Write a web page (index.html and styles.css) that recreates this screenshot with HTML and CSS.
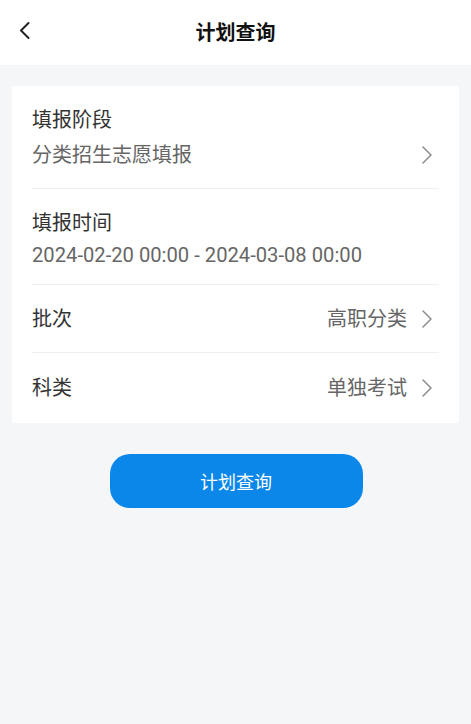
FILE: index.html
```html
<!DOCTYPE html>
<html lang="zh">
<head>
<meta charset="utf-8">
<link rel="stylesheet" href="styles.css">
</head>
<body>
<header class="nav">
  <svg class="back" width="14" height="19" viewBox="0 0 14 19"><path d="M10.5 2 L3 9.5 L10.5 17" fill="none" stroke="#222" stroke-width="2" stroke-linecap="round" stroke-linejoin="round"/></svg>
  <h1 class="title">计划查询</h1>
</header>
<main class="page">
  <section class="card">
    <div class="row stack first">
      <div class="label">填报阶段</div>
      <div class="line tall">
        <span class="value">分类招生志愿填报</span>
        <svg class="chev" width="12" height="20" viewBox="0 0 12 20"><path d="M2 2 L10 10 L2 18" fill="none" stroke="#8a8a8a" stroke-width="1.5" stroke-linecap="round" stroke-linejoin="round"/></svg>
      </div>
    </div>
    <div class="row stack">
      <div class="label">填报时间</div>
      <div class="line"><span class="value num">2024-02-20 00:00 - 2024-03-08 00:00</span></div>
    </div>
    <div class="row inline">
      <span class="label">批次</span>
      <span class="right"><span class="value">高职分类</span>
        <svg class="chev" width="12" height="20" viewBox="0 0 12 20"><path d="M2 2 L10 10 L2 18" fill="none" stroke="#8a8a8a" stroke-width="1.5" stroke-linecap="round" stroke-linejoin="round"/></svg></span>
    </div>
    <div class="row inline last">
      <span class="label">科类</span>
      <span class="right"><span class="value">单独考试</span>
        <svg class="chev" width="12" height="20" viewBox="0 0 12 20"><path d="M2 2 L10 10 L2 18" fill="none" stroke="#8a8a8a" stroke-width="1.5" stroke-linecap="round" stroke-linejoin="round"/></svg></span>
    </div>
  </section>
  <div class="actions">
    <button class="btn">计划查询</button>
  </div>
</main>
</body>
</html>
```
FILE: styles.css
```css
* { box-sizing: border-box; }
html, body { margin: 0; padding: 0; }
body {
  width: 471px;
  height: 724px;
  background: #f4f6f8;
  font-family: Roboto, "Noto Sans CJK SC", sans-serif;
  color: #333;
  overflow: hidden;
}
.nav {
  height: 65px;
  background: #fff;
  display: flex;
  align-items: center;
  justify-content: center;
  position: relative;
}
.back {
  position: absolute;
  left: 18px;
  top: 21px;
}
.title {
  margin: -3px 0 0;
  font-size: 20px;
  font-weight: 700;
  color: #111;
}
.page {
  padding: 21px 12px 0;
}
.card {
  background: #fff;
  padding: 0 20px;
  border-radius: 2px;
}
.row {
  border-bottom: 1px solid #eeeff1;
}
.row.last { border-bottom: none; }
.stack {
  padding: 21px 0 16px;
  display: flex;
  flex-direction: column;
  gap: 6px;
}
.stack.first { padding-bottom: 17px; }
.line {
  display: flex;
  align-items: center;
  justify-content: space-between;
  height: 26px;
}
.line.tall { height: 32px; }
.label {
  font-size: 20px;
  color: #333;
  line-height: 26px;
}
.value {
  font-size: 20px;
  color: #666;
  line-height: 26px;
}
.num { font-size: 20.2px; }
.chev { margin-right: 6px; }
.inline {
  height: 68px;
  display: flex;
  align-items: center;
  justify-content: space-between;
}
.inline.last { height: 70px; }
.right {
  display: flex;
  align-items: center;
  gap: 14px;
}
.actions {
  display: flex;
  justify-content: center;
  padding-top: 31px;
}
.btn {
  width: 253px;
  height: 54px;
  border: none;
  border-radius: 20px;
  background: #0b87ea;
  color: #fff;
  font-family: Roboto, "Noto Sans CJK SC", sans-serif;
  font-size: 18px;
  margin-left: 1px;
}
```
